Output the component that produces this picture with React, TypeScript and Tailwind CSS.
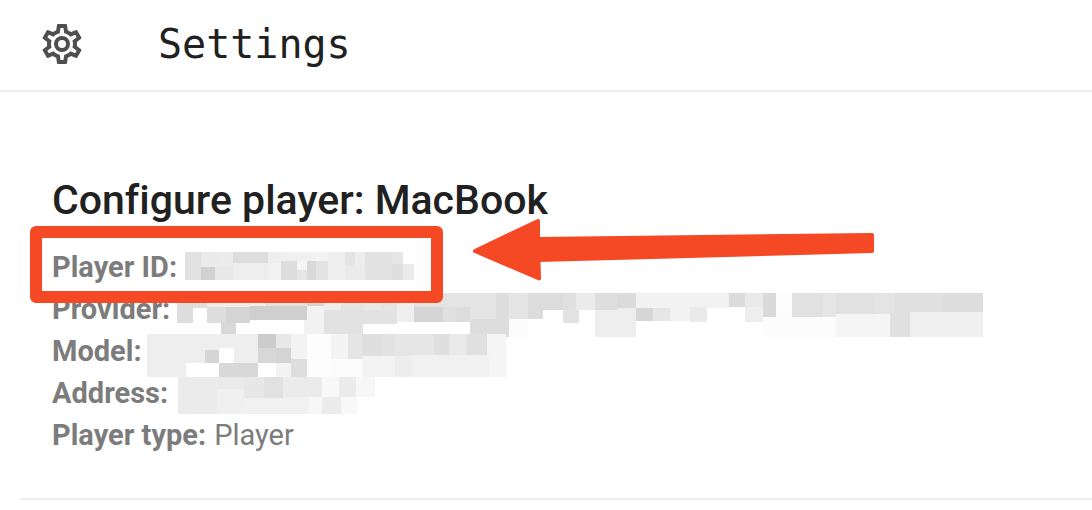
type Block = [x1: number, y1: number, x2: number, y2: number, fill: string];

type Mosaic = { left: number; top: number; width: number; blocks: Block[] };

const ROW_HEIGHT = 42;

const playerId: Mosaic = {
  left: 185,
  top: 246,
  width: 229,
  blocks: [
    [185, 252, 201, 280, "#e1e1e1"],
    [201, 252, 218, 267, "#eaeaea"],
    [201, 267, 215, 280, "#d1d1d1"],
    [218, 252, 233, 267, "#ebebeb"],
    [215, 267, 233, 280, "#e8e8e8"],
    [233, 252, 268, 263, "#dddddd"],
    [233, 263, 269, 280, "#eeeeee"],
    [268, 252, 281, 263, "#eeeeee"],
    [269, 263, 281, 280, "#f2f2f2"],
    [281, 252, 312, 261, "#f0f0f0"],
    [312, 252, 328, 261, "#f3f3f3"],
    [281, 261, 297, 280, "#dddddd"],
    [297, 261, 307, 270, "#f5f5f5"],
    [297, 270, 307, 280, "#e6e6e6"],
    [307, 261, 316, 280, "#d9d9d9"],
    [316, 261, 328, 280, "#e3e3e3"],
    [328, 252, 345, 280, "#eeeeee"],
    [345, 252, 355, 266, "#e4e4e4"],
    [355, 252, 365, 266, "#ededed"],
    [345, 266, 365, 280, "#ebebeb"],
    [365, 252, 392, 280, "#e2e2e2"],
    [392, 252, 403, 264, "#e6e6e6"],
    [392, 264, 403, 280, "#dfdfdf"],
    [403, 264, 414, 280, "#ebebeb"],
  ],
};

const provider: Mosaic = {
  left: 178,
  top: 288,
  width: 806,
  blocks: [
    [177, 293, 193, 323, "#dddddd"],
    [193, 293, 207, 308, "#dedede"],
    [207, 293, 265, 307, "#eeeeee"],
    [265, 293, 307, 306, "#e2e2e2"],
    [307, 293, 324, 306, "#d4d4d4"],
    [207, 307, 226, 323, "#dddddd"],
    [226, 307, 250, 323, "#d4d4d4"],
    [250, 306, 307, 320, "#cfcfcf"],
    [221, 323, 236, 334, "#d8d8d8"],
    [304, 320, 324, 334, "#f2f2f2"],
    [307, 306, 324, 320, "#f2f2f2"],
    [324, 293, 341, 310, "#eeeeee"],
    [341, 293, 363, 310, "#e3e3e3"],
    [324, 310, 363, 334, "#e2e2e2"],
    [363, 293, 381, 310, "#e8e8e8"],
    [381, 293, 397, 310, "#e4e4e4"],
    [363, 310, 397, 324, "#e2e2e2"],
    [397, 293, 414, 322, "#efefef"],
    [414, 293, 496, 307, "#e4e4e4"],
    [414, 307, 443, 322, "#d5d5d5"],
    [443, 307, 456, 322, "#e0e0e0"],
    [456, 307, 470, 322, "#dcdcdc"],
    [470, 307, 496, 319, "#e4e4e4"],
    [470, 319, 509, 334, "#dddddd"],
    [496, 293, 509, 337, "#dddddd"],
    [509, 293, 528, 319, "#e4e4e4"],
    [509, 319, 528, 337, "#fcfcfc"],
    [528, 293, 543, 319, "#dcdcdc"],
    [543, 293, 563, 310, "#dcdcdc"],
    [563, 293, 576, 310, "#e0e0e0"],
    [563, 310, 579, 323, "#e3e3e3"],
    [576, 293, 595, 310, "#ebebeb"],
    [595, 293, 617, 310, "#dedede"],
    [617, 293, 636, 308, "#dbdbdb"],
    [595, 310, 636, 337, "#eeeeee"],
    [617, 308, 636, 310, "#eeeeee"],
    [636, 293, 729, 308, "#f2f2f2"],
    [636, 308, 653, 321, "#d6d6d6"],
    [653, 308, 670, 321, "#e6e6e6"],
    [670, 308, 690, 321, "#f2f2f2"],
    [690, 307, 707, 322, "#eaeaea"],
    [729, 293, 745, 307, "#dbdbdb"],
    [745, 293, 763, 307, "#e9e9e9"],
    [745, 307, 763, 322, "#eeeeee"],
    [763, 293, 776, 317, "#dadada"],
    [776, 293, 792, 317, "#fdfdfd"],
    [763, 317, 836, 337, "#fcfcfc"],
    [792, 293, 823, 317, "#e1e1e1"],
    [823, 293, 836, 317, "#e6e6e6"],
    [836, 293, 875, 314, "#e1e1e1"],
    [875, 293, 894, 314, "#e4e4e4"],
    [836, 314, 890, 337, "#f5f5f5"],
    [894, 293, 942, 314, "#e0e0e0"],
    [890, 314, 910, 337, "#e0e0e0"],
    [942, 293, 983, 312, "#dddddd"],
    [910, 312, 983, 337, "#f0f0f0"],
  ],
};

const model: Mosaic = {
  left: 150,
  top: 330,
  width: 359,
  blocks: [
    [147, 334, 258, 363, "#eeeeee"],
    [147, 363, 186, 377, "#eeeeee"],
    [205, 350, 219, 363, "#d5d5d5"],
    [219, 348, 234, 363, "#fefefe"],
    [219, 363, 258, 377, "#d8d8d8"],
    [258, 334, 276, 348, "#cccccc"],
    [276, 334, 291, 348, "#e8e8e8"],
    [258, 348, 276, 363, "#d7d7d7"],
    [276, 348, 291, 363, "#d4d4d4"],
    [276, 363, 291, 377, "#f3f3f3"],
    [291, 334, 307, 359, "#f3f3f3"],
    [291, 359, 307, 377, "#dedede"],
    [307, 334, 331, 377, "#fdfdfd"],
    [331, 334, 348, 359, "#f4f4f4"],
    [348, 334, 362, 359, "#e5e5e5"],
    [331, 359, 362, 377, "#fcfcfc"],
    [362, 334, 382, 356, "#dfdfdf"],
    [382, 334, 395, 356, "#e2e2e2"],
    [395, 334, 434, 356, "#e6e6e6"],
    [434, 334, 449, 355, "#dfdfdf"],
    [449, 334, 467, 355, "#e9e9e9"],
    [467, 334, 487, 355, "#e0e0e0"],
    [362, 356, 395, 377, "#f3f3f3"],
    [395, 356, 411, 377, "#ededed"],
    [411, 355, 489, 377, "#f1f1f1"],
    [487, 334, 506, 355, "#f5f5f5"],
    [489, 355, 506, 377, "#f5f5f5"],
  ],
};

const address: Mosaic = {
  left: 176,
  top: 372,
  width: 197,
  blocks: [
    [178, 377, 217, 414, "#ebebeb"],
    [217, 377, 244, 389, "#eaeaea"],
    [217, 389, 244, 414, "#f0f0f0"],
    [244, 377, 264, 398, "#e7e7e7"],
    [264, 377, 283, 398, "#e1e1e1"],
    [283, 377, 322, 397, "#ebebeb"],
    [244, 398, 309, 414, "#f1f1f1"],
    [283, 397, 309, 398, "#f1f1f1"],
    [322, 377, 339, 397, "#f8f8f8"],
    [339, 377, 356, 397, "#ebebeb"],
    [356, 377, 375, 397, "#f7f7f7"],
    [309, 397, 322, 414, "#f7f7f7"],
    [322, 397, 341, 414, "#ececec"],
    [341, 397, 358, 414, "#f8f8f8"],
  ],
};

const details: { label: string; value: string | Mosaic }[] = [
  { label: "Player ID:", value: playerId },
  { label: "Provider:", value: provider },
  { label: "Model:", value: model },
  { label: "Address:", value: address },
  { label: "Player type:", value: "Player" },
];

function HiddenValue({ mosaic }: { mosaic: Mosaic }) {
  return (
    <svg
      className="block shrink-0 overflow-visible"
      width={mosaic.width}
      height={ROW_HEIGHT}
      viewBox={`${mosaic.left} ${mosaic.top} ${mosaic.width} ${ROW_HEIGHT}`}
      shapeRendering="crispEdges"
      aria-hidden="true"
    >
      {mosaic.blocks.map(([x1, y1, x2, y2, fill]) => (
        <rect key={`${x1}-${y1}`} x={x1} y={y1} width={x2 - x1} height={y2 - y1} fill={fill} />
      ))}
    </svg>
  );
}

function CogIcon() {
  return (
    <svg className="size-12 shrink-0 fill-[#4f4f4f]" viewBox="0 0 24 24" aria-hidden="true">
      <path d="M12,8A4,4 0 0,1 16,12A4,4 0 0,1 12,16A4,4 0 0,1 8,12A4,4 0 0,1 12,8M12,10A2,2 0 0,0 10,12A2,2 0 0,0 12,14A2,2 0 0,0 14,12A2,2 0 0,0 12,10M10,22C9.75,22 9.54,21.82 9.5,21.58L9.13,18.93C8.5,18.68 7.96,18.34 7.44,17.94L4.95,18.95C4.73,19.03 4.46,18.95 4.34,18.73L2.34,15.27C2.21,15.05 2.27,14.78 2.46,14.63L4.57,12.97L4.5,12L4.57,11L2.46,9.37C2.27,9.22 2.21,8.95 2.34,8.73L4.34,5.27C4.46,5.05 4.73,4.96 4.95,5.05L7.44,6.05C7.96,5.66 8.5,5.32 9.13,5.07L9.5,2.42C9.54,2.18 9.75,2 10,2H14C14.25,2 14.46,2.18 14.5,2.42L14.87,5.07C15.5,5.32 16.04,5.66 16.56,6.05L19.05,5.05C19.27,4.96 19.54,5.05 19.66,5.27L21.66,8.73C21.79,8.95 21.73,9.22 21.54,9.37L19.43,11L19.5,12L19.43,13L21.54,14.63C21.73,14.78 21.79,15.05 21.66,15.27L19.66,18.73C19.54,18.95 19.27,19.04 19.05,18.95L16.56,17.95C16.04,18.34 15.5,18.68 14.87,18.93L14.5,21.58C14.46,21.82 14.25,22 14,22H10M11.25,4L10.88,6.61C9.68,6.86 8.62,7.5 7.85,8.39L5.44,7.35L4.69,8.65L6.8,10.2C6.4,11.37 6.4,12.64 6.8,13.8L4.68,15.36L5.43,16.66L7.86,15.62C8.63,16.5 9.68,17.14 10.87,17.38L11.24,20H12.76L13.13,17.39C14.32,17.14 15.37,16.5 16.14,15.62L18.57,16.66L19.32,15.36L17.2,13.81C17.6,12.64 17.6,11.37 17.2,10.2L19.31,8.65L18.56,7.35L16.15,8.39C15.38,7.5 14.32,6.86 13.12,6.62L12.75,4H11.25Z" />
    </svg>
  );
}

function Arrow() {
  return (
    <svg
      className="absolute -top-7 left-[420px] fill-[#f54824] stroke-[#f54824]"
      width="404"
      height="64"
      viewBox="472 218 404 64"
      strokeWidth="4"
      strokeLinejoin="round"
      aria-hidden="true"
    >
      <path d="M475 251L538 221L538 239L872 235L872 251L538.500 260L539 278.500Z" />
    </svg>
  );
}

export default function App() {
  return (
    <div className="overflow-x-hidden bg-white font-['Roboto',sans-serif] antialiased [font-variant-ligatures:none]">
      <header className="flex h-[92px] items-center border-b-2 border-[#eeeeee] pb-0.5 pl-[38px]">
        <CogIcon />
        <h1 className="ml-[72px] font-['DejaVu_Sans_Mono',monospace] text-[40px] leading-[48px] text-[#212121]">
          Settings
        </h1>
      </header>
      <main className="ml-5 border-b-2 border-[#eeeeee] pt-[84px] pb-[42px] pl-8">
        <h2 className="h-[70px] text-[41px] leading-[48px] font-medium text-[#212121]">
          Configure player: MacBook
        </h2>
        <div className="relative">
          <dl className="text-[29px] leading-[42px] text-[#7c7c7c]">
            {details.map(({ label, value }) => (
              <div key={label} className="flex h-[42px] gap-2">
                <dt className="shrink-0 font-bold">{label}</dt>
                <dd>{typeof value === "string" ? value : <HiddenValue mosaic={value} />}</dd>
              </div>
            ))}
          </dl>
          <div className="absolute -top-5 -left-[22px] h-[77px] w-[413px] rounded-md border-12 border-[#f54824]" />
          <Arrow />
        </div>
      </main>
    </div>
  );
}
